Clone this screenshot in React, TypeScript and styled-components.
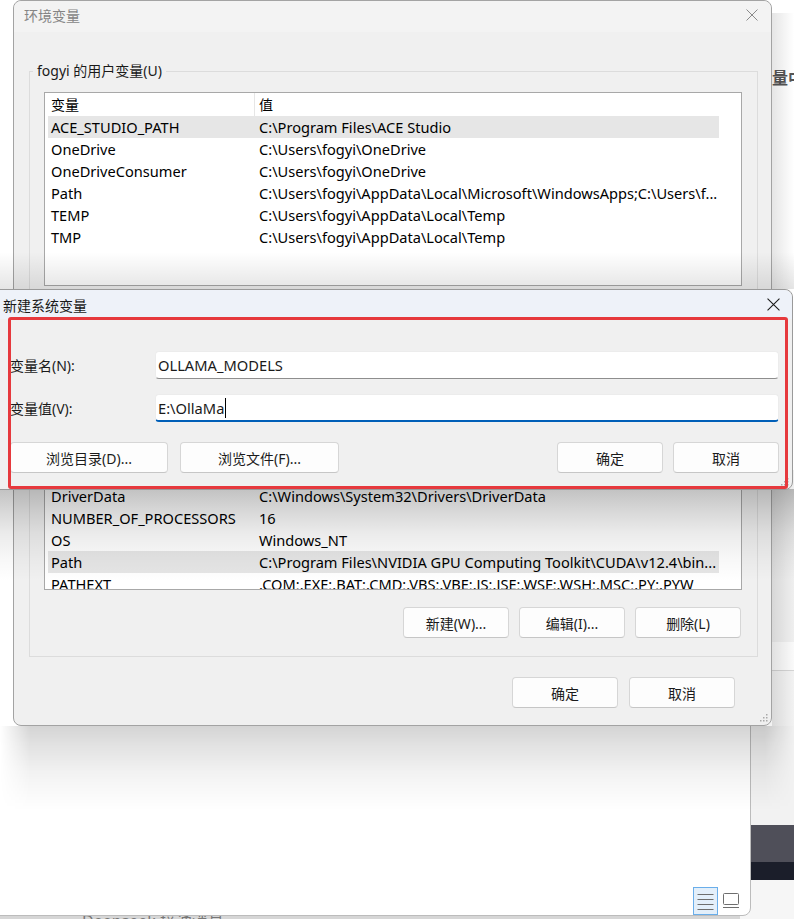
import React from "react";
import styled, { createGlobalStyle } from "styled-components";

const FONT = `"Noto Sans", "Noto Sans CJK SC", sans-serif`;

const GlobalStyle = createGlobalStyle`
  html, body { margin: 0; padding: 0; }
  body { background: #ffffff; font-family: ${FONT}; }
  * { box-sizing: border-box; }
`;

const Desktop = styled.div`
  position: relative;
  width: 794px;
  height: 919px;
  overflow: hidden;
  background: #d6d6d6;
  font-family: ${FONT};
  color: #000;
`;

/* ---------- windows behind ---------- */
const RightWindow = styled.div`
  position: absolute;
  left: 740px;
  top: 0;
  width: 80px;
  height: 919px;
  display: flex;
  flex-direction: column;
  background: #ffffff;
`;

const RightSection = styled.div<{ $h: number; $bg: string; $line?: boolean }>`
  flex: none;
  height: ${(p) => p.$h}px;
  background: ${(p) => p.$bg};
  border-bottom: ${(p) => (p.$line ? "1px solid #d4d4d4" : "none")};
`;

const RightTopText = styled.div`
  padding: 68px 0 0 32px;
  font-size: 16px;
  font-weight: 600;
  color: #555;
  white-space: nowrap;
  line-height: 20px;
`;

const BottomWindow = styled.div`
  position: absolute;
  left: 60px;
  top: 915px;
  width: 400px;
  height: 10px;
  overflow: hidden;
`;

const BottomText = styled.div`
  margin-top: -4px;
  padding-left: 22px;
  font-size: 16px;
  line-height: 20px;
  color: #777;
  white-space: nowrap;
`;

const BackWindow = styled.div`
  position: absolute;
  left: -20px;
  top: -20px;
  width: 771px;
  height: 936px;
  background: #ffffff;
  border: 1px solid #bcbcbc;
  border-radius: 8px;
  display: flex;
  flex-direction: column;
  justify-content: flex-end;
`;

const ViewBar = styled.div`
  display: flex;
  justify-content: flex-end;
  align-items: center;
  gap: 5px;
  padding: 0 11px 0 0;
  height: 28px;
`;

const ViewButton = styled.div<{ $active?: boolean; $w: number }>`
  width: ${(p) => p.$w}px;
  height: 28px;
  display: flex;
  align-items: center;
  justify-content: center;
  background: ${(p) => (p.$active ? "#e3effa" : "transparent")};
  border: ${(p) => (p.$active ? "1px solid #6aaeea" : "none")};
  color: #6a6a6a;
`;

/* ---------- generic dialog pieces ---------- */
const CloseIcon = ({ color, size }: { color: string; size: number }) => (
  <svg width={size} height={size} viewBox="0 0 12 12">
    <path d="M0.5 0.5 L11.5 11.5 M11.5 0.5 L0.5 11.5" stroke={color} strokeWidth="1" fill="none" />
  </svg>
);

const Grip = () => (
  <svg width="8" height="8" viewBox="0 0 8 8">
    <g fill="#a9a9a9">
      <rect x="6" y="0" width="1.5" height="1.5" />
      <rect x="3" y="3" width="1.5" height="1.5" />
      <rect x="6" y="3" width="1.5" height="1.5" />
      <rect x="0" y="6" width="1.5" height="1.5" />
      <rect x="3" y="6" width="1.5" height="1.5" />
      <rect x="6" y="6" width="1.5" height="1.5" />
    </g>
  </svg>
);

const GripSpot = styled.div`
  position: absolute;
  right: 3px;
  bottom: 3px;
  line-height: 0;
`;

const Button = styled.div<{ $w: number }>`
  width: ${(p) => p.$w}px;
  height: 31px;
  flex: none;
  display: flex;
  align-items: center;
  justify-content: center;
  background: #fdfdfd;
  border: 1px solid #d6d6d6;
  border-bottom-color: #c6c6c6;
  border-radius: 4px;
  font-size: 14px;
  color: #1b1b1b;
`;

const EDGE_MASK = `linear-gradient(to right, transparent 0, #000 30px, #000 calc(100% - 30px), transparent 100%)`;

/* ---------- main dialog ---------- */
const MainDialog = styled.div`
  position: absolute;
  z-index: 1;
  left: 13px;
  top: 0;
  width: 759px;
  height: 726px;
  background: #f0f0f0;
  border: 1px solid #a3a3a3;
  border-radius: 8px;
  display: flex;
  flex-direction: column;

  &::after {
    content: "";
    position: absolute;
    left: -14px;
    right: -24px;
    top: calc(100% + 1px);
    height: 84px;
    background: linear-gradient(
      to bottom,
      rgba(0, 0, 0, 0.17) 0%,
      rgba(0, 0, 0, 0.11) 25%,
      rgba(0, 0, 0, 0.05) 55%,
      rgba(0, 0, 0, 0) 100%
    );
    -webkit-mask-image: ${EDGE_MASK};
    mask-image: ${EDGE_MASK};
    pointer-events: none;
  }

  &::before {
    content: "";
    position: absolute;
    left: calc(100% + 1px);
    top: 12px;
    bottom: -1px;
    width: 22px;
    background: linear-gradient(to right, rgba(0, 0, 0, 0.1), rgba(0, 0, 0, 0));
    pointer-events: none;
  }
`;

const MainTitleBar = styled.div`
  height: 31px;
  flex: none;
  display: flex;
  align-items: center;
  justify-content: space-between;
  padding-left: 10px;
  padding-bottom: 3px;
  background: #f3f3f3;
  border-radius: 8px 8px 0 0;
`;

const MainTitle = styled.div`
  font-size: 14px;
  color: #858585;
`;

const TitleClose = styled.div<{ $w: number }>`
  width: ${(p) => p.$w}px;
  height: 100%;
  display: flex;
  align-items: center;
  justify-content: center;
`;

const MainBody = styled.div`
  flex: 1;
  display: flex;
  flex-direction: column;
  padding: 29px 13px 0 15px;
`;

const GroupBox = styled.fieldset<{ $pb: number; $mt?: number }>`
  margin: ${(p) => p.$mt ?? 0}px 0 0 0;
  padding: 11px 15px ${(p) => p.$pb}px 14px;
  border: 1px solid #dcdcdc;
  min-width: 0;
`;

const GroupLegend = styled.legend`
  margin-left: -11px;
  padding: 0 4px;
  font-size: 14px;
  line-height: 20px;
  color: #1a1a1a;
`;

const ListBox = styled.div<{ $h: number }>`
  height: ${(p) => p.$h}px;
  background: #fff;
  border: 1px solid #a8a8a8;
  overflow: hidden;
  padding-left: 3px;
`;

const ListRow = styled.div<{ $header?: boolean; $selected?: boolean }>`
  display: grid;
  grid-template-columns: 207px 464px;
  height: ${(p) => (p.$header ? 23 : 22)}px;
  line-height: ${(p) => (p.$header ? 23 : 22)}px;
  width: 671px;
  background: ${(p) => (p.$selected ? "#e6e6e6" : "transparent")};
`;

const ListCell = styled.div<{ $first?: boolean; $sep?: boolean }>`
  white-space: nowrap;
  overflow: hidden;
  padding-left: ${(p) => (p.$first ? 3 : 4)}px;
  border-right: ${(p) => (p.$sep ? "1px solid #e6e6e6" : "none")};
  font-size: ${(p) => (p.$sep !== undefined ? 14 : 14.6)}px;
`;

const GroupButtons = styled.div`
  display: flex;
  justify-content: flex-end;
  gap: 10px;
  margin-top: 17px;
  padding-right: 1px;
`;

const DialogButtons = styled.div`
  display: flex;
  justify-content: flex-end;
  gap: 11px;
  margin-top: 20px;
  padding-right: 23px;
`;

/* ---------- new variable dialog ---------- */
const NewDialog = styled.div`
  position: absolute;
  z-index: 3;
  left: -12px;
  top: 289px;
  width: 805px;
  height: 201px;
  background: #f0f0f0;
  border: 1px solid #9a9a9a;
  border-radius: 8px;
  display: flex;
  flex-direction: column;
`;

/* soft shadow that the new dialog casts over the window beneath it */
const NewDialogShadowBelow = styled.div`
  position: absolute;
  z-index: 2;
  left: 0;
  top: 489px;
  width: 794px;
  height: 92px;
  background: linear-gradient(
    to bottom,
    rgba(0, 0, 0, 0.24) 0%,
    rgba(0, 0, 0, 0.16) 22%,
    rgba(0, 0, 0, 0.08) 48%,
    rgba(0, 0, 0, 0.03) 75%,
    rgba(0, 0, 0, 0) 100%
  );
  pointer-events: none;
`;

const NewDialogShadowAbove = styled.div`
  position: absolute;
  z-index: 2;
  left: 0;
  top: 252px;
  width: 794px;
  height: 37px;
  background: linear-gradient(to top, rgba(0, 0, 0, 0.1), rgba(0, 0, 0, 0));
  pointer-events: none;
`;

const NewTitleBar = styled.div`
  height: 29px;
  flex: none;
  display: flex;
  align-items: center;
  justify-content: space-between;
  padding-left: 14px;
  background: #eef2f9;
  border-radius: 8px 8px 0 0;
`;

const NewTitle = styled.div`
  font-size: 14px;
  color: #1a1a1a;
`;

const NewBody = styled.div`
  flex: 1;
  display: flex;
  flex-direction: column;
  padding: 32px 13px 0 21px;
`;

const FieldRow = styled.div<{ $mt?: number }>`
  display: grid;
  grid-template-columns: 145px 1fr;
  align-items: center;
  margin-top: ${(p) => p.$mt ?? 0}px;
`;

const FieldLabel = styled.div`
  font-size: 14px;
  color: #1a1a1a;
`;

const TextBox = styled.div<{ $focused?: boolean }>`
  height: 28px;
  display: flex;
  align-items: center;
  padding-left: 2px;
  background: #fff;
  border: 1px solid #ececec;
  border-bottom: ${(p) => (p.$focused ? "2px solid #005fb8" : "1px solid #8e8e8e")};
  border-radius: 4px;
  font-size: 14.7px;
  color: #1a1a1a;
  white-space: nowrap;
`;

const Caret = styled.span`
  display: inline-block;
  width: 1px;
  height: 20px;
  margin-left: 1px;
  background: #000;
`;

const NewButtons = styled.div`
  display: flex;
  justify-content: space-between;
  margin-top: 20px;
`;

const ButtonGroup = styled.div<{ $gap: number }>`
  display: flex;
  gap: ${(p) => p.$gap}px;
`;

const Annotation = styled.div`
  position: absolute;
  z-index: 4;
  left: 8px;
  top: 317px;
  width: 780px;
  height: 172px;
  border: 3px solid #e6393d;
  border-radius: 3px;
  pointer-events: none;
`;

type Row = [string, string, boolean?];

const userRows: Row[] = [
  ["ACE_STUDIO_PATH", "C:\\Program Files\\ACE Studio", true],
  ["OneDrive", "C:\\Users\\fogyi\\OneDrive"],
  ["OneDriveConsumer", "C:\\Users\\fogyi\\OneDrive"],
  ["Path", "C:\\Users\\fogyi\\AppData\\Local\\Microsoft\\WindowsApps;C:\\Users\\f..."],
  ["TEMP", "C:\\Users\\fogyi\\AppData\\Local\\Temp"],
  ["TMP", "C:\\Users\\fogyi\\AppData\\Local\\Temp"],
];

const systemRows: Row[] = [
  ["ACSetupSvcPort", "23210"],
  ["ComSpec", "C:\\Windows\\system32\\cmd.exe"],
  ["CUDA_PATH", "C:\\Program Files\\NVIDIA GPU Computing Toolkit\\CUDA\\v12.4"],
  ["CUDA_PATH_V12_4", "C:\\Program Files\\NVIDIA GPU Computing Toolkit\\CUDA\\v12.4"],
  ["CUDNN_PATH", "C:\\Program Files\\NVIDIA\\CUDNN\\v9.0"],
  ["DriverData", "C:\\Windows\\System32\\Drivers\\DriverData"],
  ["NUMBER_OF_PROCESSORS", "16"],
  ["OS", "Windows_NT"],
  ["Path", "C:\\Program Files\\NVIDIA GPU Computing Toolkit\\CUDA\\v12.4\\bin...", true],
  ["PATHEXT", ".COM;.EXE;.BAT;.CMD;.VBS;.VBE;.JS;.JSE;.WSF;.WSH;.MSC;.PY;.PYW"],
  ["PROCESSOR_ARCHITECTURE", "AMD64"],
];

const VarList = ({ rows, height }: { rows: Row[]; height: number }) => (
  <ListBox $h={height}>
    <ListRow $header>
      <ListCell $first $sep>变量</ListCell>
      <ListCell $sep={false}>值</ListCell>
    </ListRow>
    {rows.map(([k, v, sel]) => (
      <ListRow key={k} $selected={!!sel}>
        <ListCell $first>{k}</ListCell>
        <ListCell>{v}</ListCell>
      </ListRow>
    ))}
  </ListBox>
);

const ListViewIcon = () => (
  <svg width="17" height="18" viewBox="0 0 17 18">
    <g stroke="#6e6e6e" strokeWidth="1">
      <line x1="0.5" y1="2.5" x2="16.5" y2="2.5" />
      <line x1="0.5" y1="7.5" x2="16.5" y2="7.5" />
      <line x1="0.5" y1="12.5" x2="16.5" y2="12.5" />
      <line x1="0.5" y1="17.5" x2="16.5" y2="17.5" />
    </g>
  </svg>
);

const PreviewIcon = () => (
  <svg width="16" height="16" viewBox="0 0 16 16">
    <g stroke="#6e6e6e" strokeWidth="1" fill="none">
      <rect x="0.5" y="0.5" width="15" height="11" rx="1" />
      <line x1="0" y1="14.5" x2="16" y2="14.5" />
    </g>
  </svg>
);

export default function App() {
  return (
    <>
      <GlobalStyle />
      <Desktop>
        <RightWindow>
          <RightSection $h={470} $bg="#ffffff">
            <RightTopText>量中</RightTopText>
          </RightSection>
          <RightSection $h={172} $bg="#efefef" />
          <RightSection $h={29} $bg="#fafafa" $line />
          <RightSection $h={154} $bg="#f2f2f2" />
          <RightSection $h={37} $bg="#4f4f59" />
          <RightSection $h={18} $bg="#1b1e2a" />
          <RightSection $h={40} $bg="#f6f6f6" />
        </RightWindow>

        <BottomWindow>
          <BottomText>Deepseek 接通消息</BottomText>
        </BottomWindow>

        <BackWindow>
          <ViewBar>
            <ViewButton $active $w={25}>
              <ListViewIcon />
            </ViewButton>
            <ViewButton $w={16}>
              <PreviewIcon />
            </ViewButton>
          </ViewBar>
        </BackWindow>

        <MainDialog>
          <MainTitleBar>
            <MainTitle>环境变量</MainTitle>
            <TitleClose $w={38}>
              <CloseIcon color="#8a8a8a" size={12} />
            </TitleClose>
          </MainTitleBar>
          <MainBody>
            <GroupBox $pb={14}>
              <GroupLegend>fogyi 的用户变量(U)</GroupLegend>
              <VarList rows={userRows} height={194} />
            </GroupBox>
            <GroupBox $pb={18} $mt={19}>
              <GroupLegend>系统变量(S)</GroupLegend>
              <VarList rows={systemRows} height={239} />
              <GroupButtons>
                <Button $w={106}>新建(W)...</Button>
                <Button $w={106}>编辑(I)...</Button>
                <Button $w={106}>删除(L)</Button>
              </GroupButtons>
            </GroupBox>
            <DialogButtons>
              <Button $w={106}>确定</Button>
              <Button $w={106}>取消</Button>
            </DialogButtons>
          </MainBody>
          <GripSpot>
            <Grip />
          </GripSpot>
        </MainDialog>

        <NewDialogShadowAbove />
        <NewDialogShadowBelow />

        <NewDialog>
          <NewTitleBar>
            <NewTitle>新建系统变量</NewTitle>
            <TitleClose $w={38}>
              <CloseIcon color="#1a1a1a" size={13} />
            </TitleClose>
          </NewTitleBar>
          <NewBody>
            <FieldRow>
              <FieldLabel>变量名(N):</FieldLabel>
              <TextBox>OLLAMA_MODELS</TextBox>
            </FieldRow>
            <FieldRow $mt={15}>
              <FieldLabel>变量值(V):</FieldLabel>
              <TextBox $focused>
                E:\OllaMa
                <Caret />
              </TextBox>
            </FieldRow>
            <NewButtons>
              <ButtonGroup $gap={12}>
                <Button $w={158}>浏览目录(D)...</Button>
                <Button $w={159}>浏览文件(F)...</Button>
              </ButtonGroup>
              <ButtonGroup $gap={10}>
                <Button $w={106}>确定</Button>
                <Button $w={106}>取消</Button>
              </ButtonGroup>
            </NewButtons>
          </NewBody>
          <GripSpot>
            <Grip />
          </GripSpot>
        </NewDialog>

        <Annotation />
      </Desktop>
    </>
  );
}
